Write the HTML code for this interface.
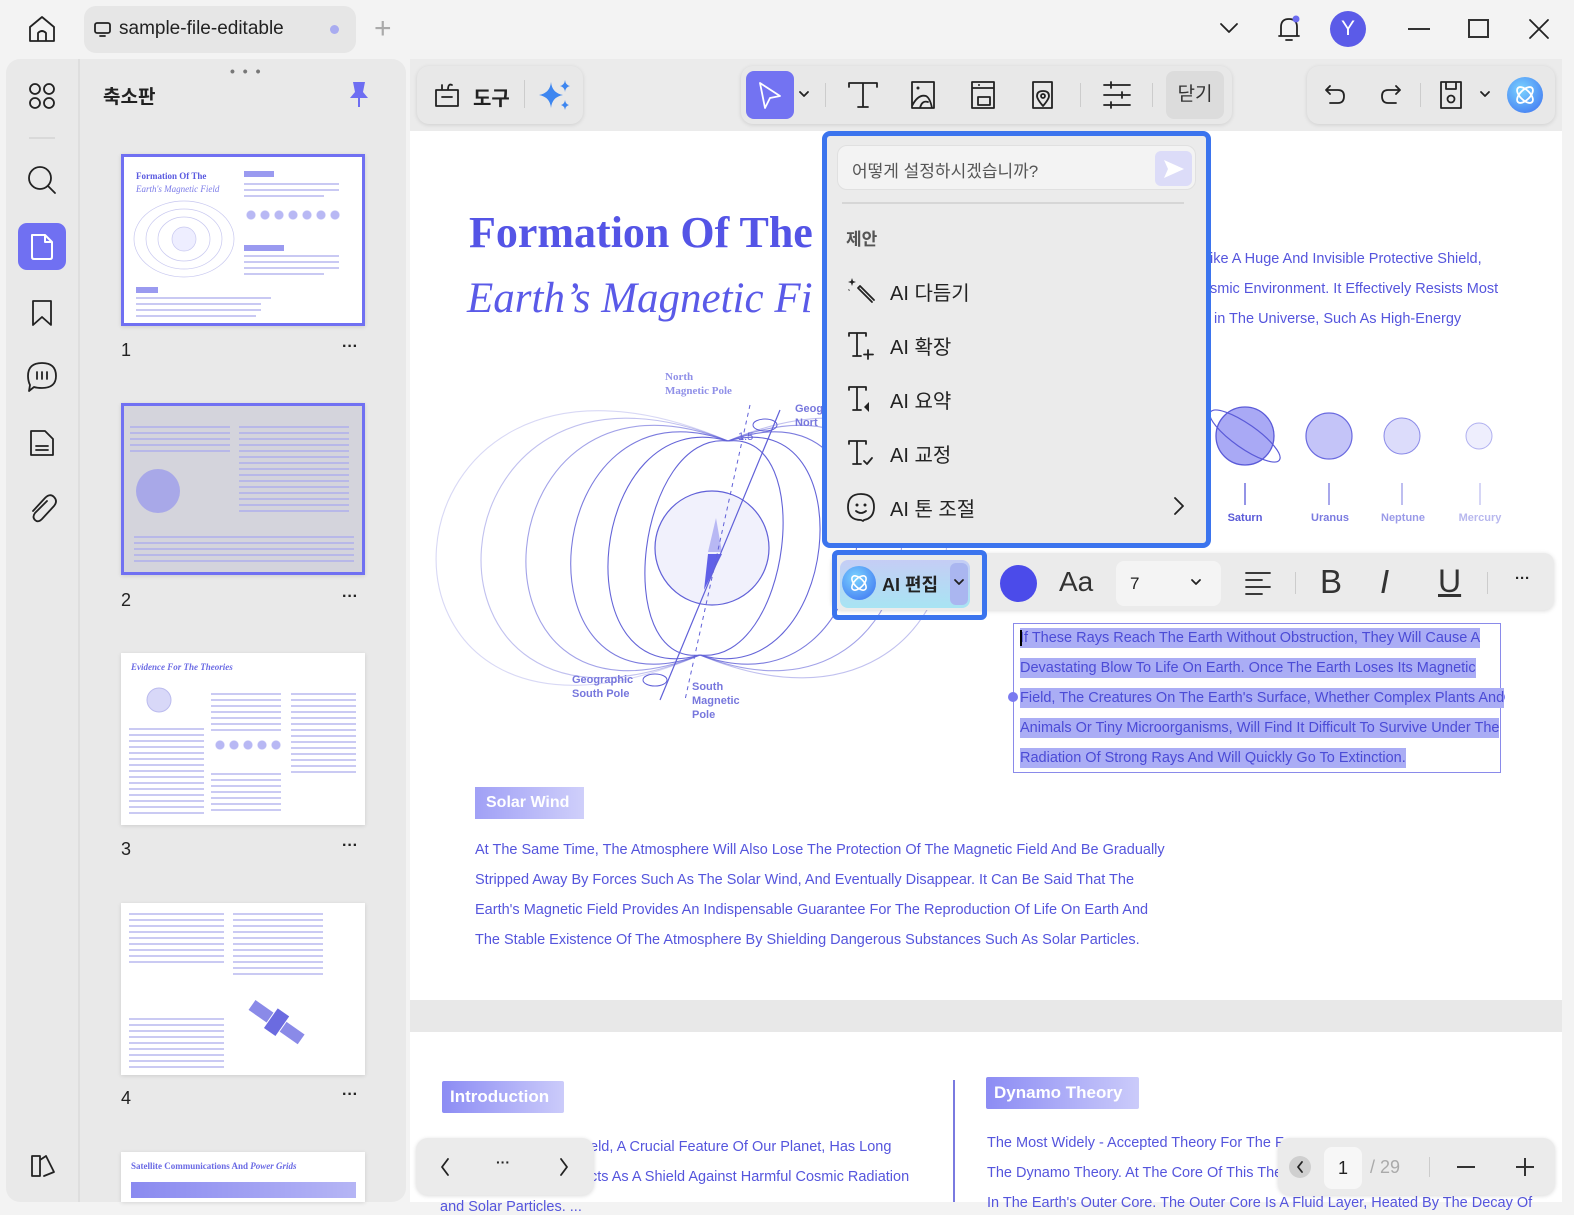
<!DOCTYPE html>
<html><head><meta charset="utf-8"><style>
*{box-sizing:border-box;margin:0;padding:0}
body{width:1574px;height:1214px;background:#f3f3f3;font-family:"Liberation Sans","Noto Sans CJK KR",sans-serif;position:relative;overflow:hidden;color:#222}
.a{position:absolute}
.ic{stroke:#222;fill:none;stroke-width:1.8;stroke-linecap:round;stroke-linejoin:round}
.pt{color:#5555dd;font-size:14.5px;position:absolute;white-space:nowrap}
.thumb{position:absolute;left:121px;width:244px;background:#fff;box-shadow:0 1px 4px rgba(0,0,0,.12)}
.tl{position:absolute;height:2px;background:#c9c9f3}
.menu-i{position:absolute;left:22px;font-size:20px;color:#222;display:flex;align-items:center;gap:14px}
.hl{background:#aaadf5;color:#4b4bd6;display:inline-block;height:20px;line-height:20px;position:absolute;left:1020px;font-size:14.5px;white-space:nowrap}
</style></head><body>
<svg class="a" style="left:26px;top:14px" width="32" height="30" viewBox="0 0 32 30"><path class="ic" d="M4 13 L16 3 L28 13 V27 H4 Z M12 27 V19 Q16 15 20 19 V27"/></svg>
<div class="a" style="left:84px;top:6px;width:272px;height:47px;background:#e6e6e6;border-radius:12px"></div>
<svg class="a" style="left:93px;top:21px" width="20" height="18"><rect x="2" y="2" width="15" height="10" rx="2" class="ic" stroke-width="1.4"/><path class="ic" stroke-width="1.4" d="M7 15 H12"/></svg>
<div class="a" style="left:119px;top:18px;font-size:19px;color:#222">sample-file-editable</div>
<div class="a" style="left:330px;top:25px;width:9px;height:9px;border-radius:50%;background:#a9acf0"></div>
<div class="a" style="left:374px;top:12px;font-size:30px;color:#aaa;font-weight:200">+</div>
<svg class="a" style="left:1218px;top:20px" width="22" height="16"><path class="ic" d="M3 4 L11 12 L19 4"/></svg>
<svg class="a" style="left:1275px;top:14px" width="28" height="30"><path class="ic" d="M6 22 V13 Q6 5 14 5 Q22 5 22 13 V22 H4 H24 M11 26 H17"/><circle cx="21" cy="5" r="3.5" fill="#6b6bf0"/></svg>
<div class="a" style="left:1330px;top:11px;width:36px;height:36px;border-radius:50%;background:#5b5be8;color:#fff;font-size:21px;text-align:center;line-height:36px">Y</div>
<div class="a" style="left:1408px;top:28px;width:22px;height:2px;background:#333"></div>
<div class="a" style="left:1468px;top:19px;width:21px;height:19px;border:2px solid #333"></div>
<svg class="a" style="left:1528px;top:18px" width="22" height="22"><path class="ic" d="M2 2 L20 20 M20 2 L2 20"/></svg>

<div class="a" style="left:6px;top:59px;width:400px;height:1143px;background:#e9e9e9;border-radius:14px"></div>
<div class="a" style="left:78px;top:59px;width:2px;height:1143px;background:#dedede"></div>
<svg class="a" style="left:28px;top:82px" width="28" height="28"><circle cx="7" cy="7" r="5" class="ic"/><circle cx="21" cy="7" r="5" class="ic"/><circle cx="7" cy="21" r="5" class="ic"/><circle cx="21" cy="21" r="5" class="ic"/></svg>
<div class="a" style="left:29px;top:137px;width:26px;height:2px;background:#d9d9d9"></div>
<svg class="a" style="left:26px;top:164px" width="32" height="32"><circle cx="14" cy="14" r="11" class="ic"/><path class="ic" d="M22 22 L29 29"/></svg>
<div class="a" style="left:18px;top:223px;width:48px;height:47px;background:#7070f2;border-radius:9px"></div>
<svg class="a" style="left:29px;top:232px" width="26" height="30"><path d="M3 3 H16 L23 10 V25 Q23 27 21 27 H5 Q3 27 3 25 Z M16 3 V10 H23" fill="none" stroke="#fff" stroke-width="2" stroke-linejoin="round"/></svg>
<svg class="a" style="left:30px;top:298px" width="24" height="30"><path class="ic" d="M3 3 H21 V27 L12 19 L3 27 Z"/></svg>
<svg class="a" style="left:25px;top:360px" width="34" height="34"><path class="ic" d="M17 3 Q31 3 31 16 Q31 28 17 28 Q12 28 9 27 L4 31 L5 25 Q3 21 3 16 Q3 3 17 3 Z M12 12 V19 M17 12 V19 M22 12 V19"/></svg>
<svg class="a" style="left:28px;top:428px" width="28" height="30"><path class="ic" d="M3 3 H17 L25 11 V27 H3 Z M8 18 H20 M8 22 H20"/></svg>
<svg class="a" style="left:27px;top:493px" width="30" height="32"><path class="ic" d="M20 8 L8 20 Q5 24 8 27 Q11 30 15 26 L27 13 Q31 8 27 4 Q23 0 18 5 L6 18"/></svg>
<svg class="a" style="left:28px;top:1152px" width="28" height="28"><path class="ic" d="M4 4 H12 V24 H4 Z M12 8 L18 4 L26 20 L16 24"/></svg>

<div class="a" style="left:230px;top:63px;font-size:14px;color:#777;letter-spacing:2px;font-weight:bold">• • •</div>
<div class="a" style="left:103px;top:82px;font-size:19px;font-weight:bold;color:#222">축소판</div>
<svg class="a" style="left:346px;top:80px" width="26" height="30"><path d="M7 2 H19 L17 12 L22 18 H4 L9 12 Z" fill="#6e6ef2"/><rect x="12" y="18" width="2" height="9" fill="#6e6ef2"/></svg>

<div class="thumb" style="top:154px;height:172px;border:3px solid #7070f2">
 <div class="a" style="left:12px;top:14px;font:bold 9px 'Liberation Serif';color:#5a5ae0">Formation Of The</div>
 <div class="a" style="left:12px;top:27px;font:italic 9px 'Liberation Serif';color:#7a7ae8">Earth's Magnetic Field</div>
 <svg class="a" style="left:4px;top:40px" width="120" height="90"><g fill="none" stroke="#c8c8f0" stroke-width=".7"><ellipse cx="56" cy="42" rx="50" ry="38"/><ellipse cx="56" cy="42" rx="38" ry="30"/><ellipse cx="56" cy="42" rx="26" ry="22"/><circle cx="56" cy="42" r="12" fill="#eef"/></g></svg>
 <div class="tl" style="left:120px;top:14px;width:30px;height:6px;background:#9a9af0"></div>
 <div class="tl" style="left:120px;top:26px;width:95px"></div><div class="tl" style="left:120px;top:32px;width:95px"></div><div class="tl" style="left:120px;top:38px;width:80px"></div>
 <div class="a" style="left:120px;top:52px;width:100px;height:12px;background:radial-gradient(circle,#b8b8f4 4px,transparent 5px) 0 0/14px 12px"></div>
 <div class="tl" style="left:120px;top:88px;width:40px;height:6px;background:#9a9af0"></div>
 <div class="tl" style="left:120px;top:98px;width:95px"></div><div class="tl" style="left:120px;top:104px;width:95px"></div><div class="tl" style="left:120px;top:110px;width:95px"></div><div class="tl" style="left:120px;top:116px;width:80px"></div>
 <div class="tl" style="left:12px;top:130px;width:22px;height:6px;background:#9a9af0"></div>
 <div class="tl" style="left:12px;top:140px;width:135px"></div><div class="tl" style="left:12px;top:146px;width:125px"></div><div class="tl" style="left:12px;top:152px;width:125px"></div><div class="tl" style="left:12px;top:158px;width:120px"></div>
</div>
<div class="a" style="left:121px;top:340px;font-size:18px">1</div><div class="a" style="left:342px;top:338px;font-size:16px;font-weight:bold">···</div>
<div class="thumb" style="top:403px;height:172px;background:#d4d4dc;border:3px solid #7070f2">
 <div class="a" style="left:10px;top:130px;width:220px;height:30px;background:repeating-linear-gradient(#b8b8e8 0 2px,transparent 2px 6px)"></div>
 <svg class="a" style="left:4px;top:50px" width="90" height="70"><circle cx="30" cy="35" r="22" fill="#a8a8e8"/></svg>
 <div class="a" style="left:115px;top:20px;width:110px;height:90px;background:repeating-linear-gradient(#b8b8e8 0 2px,transparent 2px 6px)"></div>
 <div class="a" style="left:6px;top:20px;width:100px;height:30px;background:repeating-linear-gradient(#b8b8e8 0 2px,transparent 2px 6px)"></div>
</div>
<div class="a" style="left:121px;top:590px;font-size:18px">2</div><div class="a" style="left:342px;top:588px;font-size:16px;font-weight:bold">···</div>
<div class="thumb" style="top:653px;height:172px">
 <div class="a" style="left:10px;top:9px;font:italic bold 9px 'Liberation Serif';color:#6a6ae4">Evidence For The Theories</div>
 <svg class="a" style="left:8px;top:25px" width="70" height="50"><circle cx="30" cy="22" r="12" fill="#d8d8f8" stroke="#bbe"/></svg>
 <div class="a" style="left:8px;top:75px;width:75px;height:88px;background:repeating-linear-gradient(#cacaf3 0 2px,transparent 2px 6px)"></div>
 <div class="a" style="left:90px;top:40px;width:70px;height:40px;background:repeating-linear-gradient(#cacaf3 0 2px,transparent 2px 6px)"></div>
 <div class="a" style="left:90px;top:120px;width:70px;height:40px;background:repeating-linear-gradient(#cacaf3 0 2px,transparent 2px 6px)"></div>
 <div class="a" style="left:170px;top:40px;width:65px;height:80px;background:repeating-linear-gradient(#cacaf3 0 2px,transparent 2px 6px)"></div>
 <div class="a" style="left:92px;top:86px;width:70px;height:12px;background:radial-gradient(circle,#b8b8f4 4px,transparent 5px) 0 0/14px 12px"></div>
</div>
<div class="a" style="left:121px;top:839px;font-size:18px">3</div><div class="a" style="left:342px;top:837px;font-size:16px;font-weight:bold">···</div>
<div class="thumb" style="top:903px;height:172px">
 <div class="a" style="left:8px;top:10px;width:95px;height:50px;background:repeating-linear-gradient(#cacaf3 0 2px,transparent 2px 6px)"></div>
 <div class="a" style="left:8px;top:115px;width:95px;height:50px;background:repeating-linear-gradient(#cacaf3 0 2px,transparent 2px 6px)"></div>
 <div class="a" style="left:112px;top:10px;width:90px;height:65px;background:repeating-linear-gradient(#cacaf3 0 2px,transparent 2px 6px)"></div>
 <svg class="a" style="left:120px;top:85px" width="70" height="70"><g transform="rotate(35 35 35)" fill="#8a8ae8"><rect x="5" y="28" width="22" height="12"/><rect x="43" y="28" width="22" height="12"/><rect x="28" y="22" width="14" height="24" fill="#6b6be0"/></g></svg>
</div>
<div class="a" style="left:121px;top:1088px;font-size:18px">4</div><div class="a" style="left:342px;top:1086px;font-size:16px;font-weight:bold">···</div>
<div class="thumb" style="top:1152px;height:50px">
 <div class="a" style="left:10px;top:9px;font:bold 9px 'Liberation Serif';color:#6a6ae4">Satellite Communications And <i>Power Grids</i></div>
 <div class="a" style="left:10px;top:30px;width:225px;height:16px;background:linear-gradient(90deg,#8a8af0,#b5b5f5)"></div>
</div>

<div class="a" style="left:410px;top:59px;width:1152px;height:72px;background:#ebebeb"></div>
<div class="a" style="left:417px;top:66px;width:166px;height:58px;background:#e8e8e8;border-radius:12px;box-shadow:0 1px 4px rgba(0,0,0,.12)"></div>
<svg class="a" style="left:432px;top:80px" width="32" height="30"><path class="ic" d="M4 10 H26 V26 H4 Z M10 17 H20 M10 10 V5 M16 10 Q16 3 20 5"/></svg>
<div class="a" style="left:473px;top:82px;font-size:20px;font-weight:bold">도구</div>
<div class="a" style="left:524px;top:80px;width:1px;height:28px;background:#ccc"></div>
<svg class="a" style="left:537px;top:78px" width="36" height="34"><path d="M14 4 Q15 15 26 17 Q15 19 14 30 Q13 19 2 17 Q13 15 14 4Z" fill="#3d86f0"/><path d="M28 2 Q28.5 7 33 8 Q28.5 9 28 14 Q27.5 9 23 8 Q27.5 7 28 2Z" fill="#3d86f0"/><path d="M28 22 Q28.5 26 32 27 Q28.5 28 28 32 Q27.5 28 24 27 Q27.5 26 28 22Z" fill="#3d86f0"/></svg>

<div class="a" style="left:741px;top:66px;width:491px;height:58px;background:#e8e8e8;border-radius:12px;box-shadow:0 1px 4px rgba(0,0,0,.12)"></div>
<div class="a" style="left:746px;top:71px;width:48px;height:48px;background:#7373f2;border-radius:8px"></div>
<svg class="a" style="left:756px;top:80px" width="28" height="30"><path d="M4 3 L24 16 L14 18 L9 28 Z" fill="none" stroke="#fff" stroke-width="1.8" stroke-linejoin="round"/></svg>
<svg class="a" style="left:798px;top:90px" width="12" height="10"><path class="ic" stroke-width="1.5" d="M2 2 L6 6 L10 2"/></svg>
<div class="a" style="left:825px;top:83px;width:1px;height:24px;background:#ccc"></div>
<svg class="a" style="left:846px;top:80px" width="34" height="30"><path class="ic" stroke-width="1.6" d="M3 7 V3 H31 V7 M17 3 V27 M12 27 H22"/></svg>
<svg class="a" style="left:908px;top:78px" width="30" height="34"><path class="ic" d="M4 4 H26 V30 H4 Z M4 28 Q10 16 18 18 Q22 20 24 30 M12 30 Q14 22 20 24"/><circle cx="10" cy="10" r="1.5" fill="#222"/></svg>
<svg class="a" style="left:968px;top:78px" width="32" height="34"><path class="ic" d="M4 4 H26 V30 H4 Z M4 10 H26 M10 19 H22 V27 H10 Z"/><circle cx="11" cy="7" r="1" fill="#222"/></svg>
<svg class="a" style="left:1028px;top:78px" width="30" height="34"><path class="ic" d="M5 4 H24 V30 H5 Z M15 28 Q9 21 9 18 Q9 13 15 13 Q21 13 21 18 Q21 21 15 28Z"/><circle cx="15" cy="18" r="2" class="ic"/></svg>
<div class="a" style="left:1080px;top:83px;width:1px;height:24px;background:#ccc"></div>
<svg class="a" style="left:1101px;top:80px" width="32" height="30"><path class="ic" stroke-width="1.6" d="M3 5 H29 M3 15 H29 M3 25 H29 M10 2 V8 M21 12 V18 M10 22 V28"/></svg>
<div class="a" style="left:1152px;top:83px;width:1px;height:24px;background:#ccc"></div>
<div class="a" style="left:1166px;top:71px;width:58px;height:48px;background:#dcdcdc;border-radius:8px;font-size:19px;text-align:center;line-height:48px;color:#333">닫기</div>

<div class="a" style="left:1307px;top:66px;width:248px;height:58px;background:#e8e8e8;border-radius:12px;box-shadow:0 1px 4px rgba(0,0,0,.12)"></div>
<svg class="a" style="left:1322px;top:82px" width="26" height="26"><path class="ic" d="M8 4 L4 8 L8 12 M4 8 H16 Q22 8 22 14 Q22 21 16 21 H8"/></svg>
<svg class="a" style="left:1378px;top:82px" width="26" height="26"><path class="ic" stroke="#bbb" d="M18 4 L22 8 L18 12 M22 8 H10 Q4 8 4 14 Q4 21 10 21 H18"/></svg>
<div class="a" style="left:1420px;top:83px;width:1px;height:24px;background:#ccc"></div>
<svg class="a" style="left:1437px;top:78px" width="28" height="34"><path class="ic" d="M4 4 H24 V30 H4 Z M9 4 V11 H19 V4"/><circle cx="14" cy="21" r="3.5" class="ic"/></svg>
<svg class="a" style="left:1479px;top:90px" width="12" height="10"><path class="ic" stroke-width="1.5" d="M2 2 L6 6 L10 2"/></svg>
<div class="a" style="left:1507px;top:77px;width:36px;height:36px;border-radius:50%;background:radial-gradient(circle at 40% 35%,#7ad3ff,#3b6ef0)"></div>
<svg class="a" style="left:1510px;top:80px" width="30" height="30"><ellipse cx="15" cy="15" rx="10" ry="5" fill="none" stroke="#fff" stroke-width="1.8" transform="rotate(45 15 15)"/><ellipse cx="15" cy="15" rx="10" ry="5" fill="none" stroke="#fff" stroke-width="1.8" transform="rotate(-45 15 15)"/></svg>

<div class="a" style="left:410px;top:131px;width:1152px;height:869px;background:#fff"></div>
<div class="a" style="left:410px;top:1000px;width:1152px;height:32px;background:#e8e8e8"></div>
<div class="a" style="left:410px;top:1032px;width:1152px;height:170px;background:#fff"></div>

<div class="a" style="left:469px;top:207px;font:bold 44px 'Liberation Serif';color:#5454e6;white-space:nowrap">Formation Of The</div>
<div class="a" style="left:467px;top:274px;font:italic 43px 'Liberation Serif';color:#5a5ae8;white-space:nowrap">Earth’s Magnetic Fi</div>

<div class="pt" style="left:1210px;top:251px">ike A Huge And Invisible Protective Shield,</div>
<div class="pt" style="left:1210px;top:281px">smic Environment. It Effectively Resists Most</div>
<div class="pt" style="left:1214px;top:311px">in The Universe, Such As High-Energy</div>

<svg class="a" style="left:420px;top:350px" width="600" height="400" viewBox="420 350 600 400">
 <g fill="none" stroke="#6464d8" stroke-width="1.1">
  <path d="M728 441 C638 431 610 665 700 655"/>
  <path d="M728 441 C588 401 560 695 700 655"/>
  <path d="M728 441 C538 371 510 725 700 655" stroke-opacity=".85"/>
  <path d="M728 441 C478 341 450 755 700 655" stroke-opacity=".6"/>
  <path d="M728 441 C418 311 390 785 700 655" stroke-opacity=".4"/>
  <path d="M728 441 C358 281 330 815 700 655" stroke-opacity=".25"/>
  <path d="M728 441 C818 431 790 665 700 655"/>
  <path d="M728 441 C868 401 840 695 700 655"/>
  <path d="M728 441 C918 371 890 725 700 655" stroke-opacity=".85"/>
  <path d="M728 441 C978 341 950 755 700 655" stroke-opacity=".6"/>
  <path d="M728 441 C1038 311 1010 785 700 655" stroke-opacity=".4"/>
 </g>
 <circle cx="712" cy="548" r="57" fill="#f1f1fc" stroke="#6060d8" stroke-width="1.2"/>
 <path d="M716 518 L722 552 L708 552 Z" fill="#b8b8f4"/><path d="M708 554 L722 554 L704 590 Z" fill="#6060e8"/>
 <path d="M780 410 L660 700" stroke="#6060d8" stroke-width="1.2"/>
 <path d="M750 405 L685 700" stroke="#6060d8" stroke-width="1" stroke-dasharray="4 4"/>
 <ellipse cx="765" cy="425" rx="12" ry="6" fill="none" stroke="#6060d8"/>
 <ellipse cx="655" cy="680" rx="12" ry="6" fill="none" stroke="#6060d8"/>
 <text x="738" y="440" font-family="Liberation Sans" font-size="11" fill="#6060d8">1.5</text>
 <text x="665" y="380" font-family="Liberation Serif" font-size="11" font-weight="bold" fill="#9090e8">North</text>
 <text x="665" y="394" font-family="Liberation Serif" font-size="11" font-weight="bold" fill="#9090e8">Magnetic Pole</text>
 <text x="795" y="412" font-family="Liberation Sans" font-size="11" font-weight="bold" fill="#7777dd">Geog</text>
 <text x="795" y="426" font-family="Liberation Sans" font-size="11" font-weight="bold" fill="#7777dd">Nort</text>
 <text x="572" y="683" font-family="Liberation Sans" font-size="11" font-weight="bold" fill="#7777dd">Geographic</text>
 <text x="572" y="697" font-family="Liberation Sans" font-size="11" font-weight="bold" fill="#7777dd">South Pole</text>
 <text x="692" y="690" font-family="Liberation Sans" font-size="11" font-weight="bold" fill="#7777dd">South</text>
 <text x="692" y="704" font-family="Liberation Sans" font-size="11" font-weight="bold" fill="#7777dd">Magnetic</text>
 <text x="692" y="718" font-family="Liberation Sans" font-size="11" font-weight="bold" fill="#7777dd">Pole</text>
</svg>

<svg class="a" style="left:1205px;top:395px" width="320" height="135" viewBox="1205 395 320 135">
 <circle cx="1245" cy="436" r="29" fill="#a9a9f5" stroke="#5a5ad8" stroke-width="1.3"/>
 <ellipse cx="1245" cy="436" rx="42" ry="12" fill="none" stroke="#5a5ad8" stroke-width="1.2" transform="rotate(35 1245 436)"/>
 <circle cx="1329" cy="436" r="23" fill="#c4c4f8" stroke="#6a6ae0" stroke-width="1.2"/>
 <circle cx="1402" cy="436" r="18" fill="#dcdcfb" stroke="#8a8ae8"/>
 <circle cx="1479" cy="436" r="13" fill="#eeeefd" stroke="#b0b0f0"/>
 <g stroke-width="1.3"><path d="M1245 483 V505" stroke="#5a5ad8"/><path d="M1329 483 V505" stroke="#7a7ae0"/><path d="M1402 483 V505" stroke="#9a9ae8"/><path d="M1480 483 V505" stroke="#c0c0f0"/></g>
 <g font-family="Liberation Sans" font-size="11" font-weight="bold" text-anchor="middle"><text x="1245" y="521" fill="#5a5ad8">Saturn</text><text x="1330" y="521" fill="#7a7ae0">Uranus</text><text x="1403" y="521" fill="#9a9ae8">Neptune</text><text x="1480" y="521" fill="#b8b8ee">Mercury</text></g>
</svg>

<div class="a" style="left:1013px;top:623px;width:488px;height:150px;border:1.5px solid #8a8aea"></div>
<div class="a" style="left:1008px;top:692px;width:10px;height:10px;border-radius:50%;background:#7a7af0"></div>
<div class="a" style="left:1495px;top:692px;width:10px;height:10px;border-radius:50%;background:#7a7af0"></div>
<div class="hl" style="top:628px">If These Rays Reach The Earth Without Obstruction, They Will Cause A</div>
<div class="a" style="left:1020px;top:630px;width:2px;height:16px;background:#000"></div>
<div class="hl" style="top:658px">Devastating Blow To Life On Earth. Once The Earth Loses Its Magnetic</div>
<div class="hl" style="top:688px">Field, The Creatures On The Earth's Surface, Whether Complex Plants And</div>
<div class="hl" style="top:718px">Animals Or Tiny Microorganisms, Will Find It Difficult To Survive Under The</div>
<div class="hl" style="top:748px">Radiation Of Strong Rays And Will Quickly Go To Extinction.</div>

<div class="a" style="left:475px;top:787px;width:109px;height:32px;background:linear-gradient(90deg,#a0a0f6,#cfcffa);color:#fff;font-size:16px;font-weight:bold;line-height:32px;padding-left:11px">Solar Wind</div>
<div class="pt" style="left:475px;top:842px">At The Same Time, The Atmosphere Will Also Lose The Protection Of The Magnetic Field And Be Gradually</div>
<div class="pt" style="left:475px;top:872px">Stripped Away By Forces Such As The Solar Wind, And Eventually Disappear. It Can Be Said That The</div>
<div class="pt" style="left:475px;top:902px">Earth's Magnetic Field Provides An Indispensable Guarantee For The Reproduction Of Life On Earth And</div>
<div class="pt" style="left:475px;top:932px">The Stable Existence Of The Atmosphere By Shielding Dangerous Substances Such As Solar Particles.</div>

<div class="a" style="left:442px;top:1081px;width:122px;height:32px;background:linear-gradient(90deg,#8c8cf4,#cbcbfa);color:#fff;font-size:17px;font-weight:bold;line-height:32px;padding-left:8px;border-radius:2px">Introduction</div>
<div class="a" style="left:953px;top:1080px;width:2px;height:122px;background:#7a7ae0"></div>
<div class="a" style="left:986px;top:1077px;width:153px;height:32px;background:linear-gradient(90deg,#8c8cf4,#cbcbfa);color:#fff;font-size:17px;font-weight:bold;line-height:32px;padding-left:8px;border-radius:2px">Dynamo Theory</div>
<div class="pt" style="left:590px;top:1139px">eld, A Crucial Feature Of Our Planet, Has Long</div>
<div class="pt" style="left:590px;top:1169px">cts As A Shield Against Harmful Cosmic Radiation</div>
<div class="pt" style="left:440px;top:1199px">and Solar Particles. ...</div>
<div class="pt" style="left:987px;top:1135px">The Most Widely - Accepted Theory For The Fo</div>
<div class="pt" style="left:987px;top:1165px">The Dynamo Theory. At The Core Of This Theo</div>
<div class="pt" style="left:987px;top:1195px">In The Earth's Outer Core. The Outer Core Is A Fluid Layer, Heated By The Decay Of</div>

<div class="a" style="left:416px;top:1138px;width:178px;height:57px;background:#ebebeb;border-radius:12px;box-shadow:0 1px 4px rgba(0,0,0,.15)"></div>
<svg class="a" style="left:438px;top:1157px" width="14" height="20"><path class="ic" stroke-width="1.6" d="M10 2 L4 10 L10 18"/></svg>
<div class="a" style="left:496px;top:1154px;font-size:14px;font-weight:bold">···</div>
<svg class="a" style="left:557px;top:1157px" width="14" height="20"><path class="ic" stroke="#aaa" stroke-width="1.6" d="M4 2 L10 10 L4 18"/></svg>

<div class="a" style="left:1278px;top:1138px;width:277px;height:57px;background:#ebebeb;border-radius:12px;box-shadow:0 1px 4px rgba(0,0,0,.15)"></div>
<div class="a" style="left:1289px;top:1156px;width:22px;height:22px;border-radius:50%;background:#cfcfcf"></div>
<svg class="a" style="left:1294px;top:1160px" width="12" height="14"><path class="ic" stroke-width="1.4" d="M8 2 L4 7 L8 12"/></svg>
<div class="a" style="left:1324px;top:1147px;width:38px;height:42px;background:#f7f7f7;border-radius:8px;font-size:18px;text-align:center;line-height:42px">1</div>
<div class="a" style="left:1370px;top:1157px;font-size:18px;color:#aaa">/ 29</div>
<div class="a" style="left:1429px;top:1157px;width:1px;height:20px;background:#ccc"></div>
<div class="a" style="left:1457px;top:1166px;width:18px;height:2px;background:#333"></div>
<div class="a" style="left:1516px;top:1166px;width:18px;height:2px;background:#333"></div>
<div class="a" style="left:1524px;top:1158px;width:2px;height:18px;background:#333"></div>

<div class="a" style="left:822px;top:131px;width:389px;height:417px;background:#ebebeb;border:5px solid #3b74ee;border-radius:8px"></div>
<div class="a" style="left:837px;top:145px;width:359px;height:45px;background:#f3f3f3;border-radius:10px;border:1px solid #e0e0e0"></div>
<div class="a" style="left:852px;top:157px;font-size:17px;color:#555">어떻게 설정하시겠습니까?</div>
<div class="a" style="left:1155px;top:151px;width:37px;height:35px;background:#dcdcf8;border-radius:6px"></div>
<svg class="a" style="left:1160px;top:156px" width="28" height="26"><path d="M4 4 L24 13 L4 22 L8 13 Z" fill="#fff"/></svg>
<div class="a" style="left:842px;top:202px;width:342px;height:2px;background:#d6d6d6"></div>
<div class="a" style="left:846px;top:225px;font-size:17px;color:#555;font-weight:bold">제안</div>
<div class="menu-i" style="left:846px;top:276px"><svg width="30" height="30"><path class="ic" stroke-width="1.6" d="M12 12 L26 26 M14 10 L28 24 M12 12 L14 10"/><path d="M6 2 L7 5 L10 6 L7 7 L6 10 L5 7 L2 6 L5 5Z M3 13 L4 15 L2 14Z" fill="#222"/></svg>AI 다듬기</div>
<div class="menu-i" style="left:846px;top:330px"><svg width="30" height="30"><path class="ic" stroke-width="1.6" d="M3 6 V3 H20 V6 M11 3 V26 M7 26 H15 M22 20 V29 M18 24.5 H27"/></svg>AI 확장</div>
<div class="menu-i" style="left:846px;top:384px"><svg width="30" height="30"><path class="ic" stroke-width="1.6" d="M3 6 V3 H20 V6 M11 3 V26 M7 26 H15"/><path d="M23 18 V28 L18 23Z" fill="#222"/></svg>AI 요약</div>
<div class="menu-i" style="left:846px;top:438px"><svg width="30" height="30"><path class="ic" stroke-width="1.6" d="M3 6 V3 H20 V6 M11 3 V26 M7 26 H15 M18 23 L21 26 L26 20"/></svg>AI 교정</div>
<div class="menu-i" style="left:846px;top:492px"><svg width="30" height="30"><path class="ic" stroke-width="1.6" d="M15 2 Q28 2 28 15 Q28 26 18 28 L17 29 L15 28 Q2 28 2 15 Q2 2 15 2Z M10 19 Q15 23 20 19"/><circle cx="11" cy="13" r="1.5" fill="#222"/><circle cx="19" cy="13" r="1.5" fill="#222"/></svg>AI 톤 조절</div>
<svg class="a" style="left:1172px;top:495px" width="14" height="22"><path class="ic" stroke-width="1.6" d="M3 3 L11 11 L3 19"/></svg>

<div class="a" style="left:832px;top:553px;width:722px;height:57px;background:#ebebeb;border-radius:10px;box-shadow:0 1px 5px rgba(0,0,0,.15)"></div>
<div class="a" style="left:832px;top:550px;width:155px;height:70px;border:5px solid #3b74ee;border-radius:6px"></div>
<div class="a" style="left:840px;top:560px;width:130px;height:48px;border-radius:8px;background:linear-gradient(180deg,#c5cdf5,#a8e4f3)"></div>
<div class="a" style="left:950px;top:563px;width:18px;height:42px;border-radius:6px;background:#aab6f0"></div>
<svg class="a" style="left:953px;top:578px" width="12" height="10"><path class="ic" stroke-width="1.6" d="M2 2 L6 6 L10 2"/></svg>
<div class="a" style="left:842px;top:566px;width:34px;height:34px;border-radius:50%;background:radial-gradient(circle at 40% 35%,#7ad3ff,#3b6ef0)"></div>
<svg class="a" style="left:844px;top:568px" width="30" height="30"><ellipse cx="15" cy="15" rx="9" ry="4.5" fill="none" stroke="#fff" stroke-width="1.6" transform="rotate(45 15 15)"/><ellipse cx="15" cy="15" rx="9" ry="4.5" fill="none" stroke="#fff" stroke-width="1.6" transform="rotate(-45 15 15)"/></svg>
<div class="a" style="left:882px;top:571px;font-size:18px;font-weight:bold;color:#222">AI 편집</div>
<div class="a" style="left:1000px;top:565px;width:37px;height:37px;border-radius:50%;background:#4b4bea"></div>
<div class="a" style="left:1059px;top:566px;font-size:28px;color:#333">Aa</div>
<div class="a" style="left:1116px;top:561px;width:105px;height:45px;background:#f4f4f4;border-radius:8px"></div>
<div class="a" style="left:1130px;top:574px;font-size:17px">7</div>
<svg class="a" style="left:1190px;top:578px" width="12" height="10"><path class="ic" stroke-width="1.5" d="M2 2 L6 6 L10 2"/></svg>
<svg class="a" style="left:1244px;top:570px" width="28" height="26"><path class="ic" stroke-width="1.6" d="M2 3 H26 M2 10 H18 M2 17 H26 M2 24 H18"/></svg>
<div class="a" style="left:1295px;top:572px;width:1px;height:22px;background:#ccc"></div>
<div class="a" style="left:1320px;top:563px;font-size:33px;color:#333;font-weight:200">B</div>
<div class="a" style="left:1380px;top:563px;font-size:33px;color:#333;font-style:italic;font-weight:200">I</div>
<div class="a" style="left:1438px;top:563px;font-size:32px;color:#333;text-decoration:underline;font-weight:200">U</div>
<div class="a" style="left:1487px;top:572px;width:1px;height:22px;background:#ccc"></div>
<div class="a" style="left:1515px;top:570px;font-size:15px;font-weight:bold">···</div>
</body></html>
